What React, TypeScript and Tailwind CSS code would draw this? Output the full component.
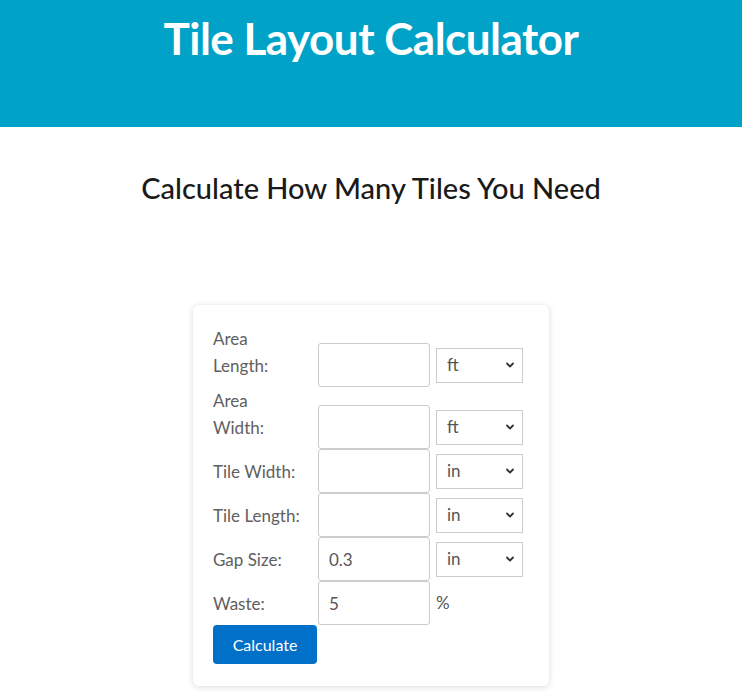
import React from "react";

interface IRow {
    label: string[];
    unit: string;
    value: string;
    options?: string[];
}

const rows: IRow[] = [
    { label: ["Area", "Length:"], unit: "ft", value: "", options: ["ft", "m", "in", "cm"] },
    { label: ["Area", "Width:"], unit: "ft", value: "", options: ["ft", "m", "in", "cm"] },
    { label: ["Tile Width:"], unit: "in", value: "", options: ["in", "cm", "mm"] },
    { label: ["Tile Length:"], unit: "in", value: "", options: ["in", "cm", "mm"] },
    { label: ["Gap Size:"], unit: "in", value: "0.3", options: ["in", "mm"] },
    { label: ["Waste:"], unit: "%", value: "5" },
];

const Chevron = () => (
    <svg
        className="pointer-events-none absolute right-[8px] top-1/2 -translate-y-1/2 w-[10px] h-[10px] text-[#333]"
        viewBox="0 0 10 10"
        fill="none"
        stroke="currentColor"
        strokeWidth={1.8}
    >
        <path d="M2 3.5l3 3 3-3" strokeLinecap="round" strokeLinejoin="round" />
    </svg>
);

const Row: React.FC<{ row: IRow }> = ({ row }) => (
    <div className="flex items-end">
        <label className="w-[105px] pb-[8px] text-[17px] leading-[27px] text-[#606060]">
            {row.label.map((l, i) => (
                <span key={i} className="block">
                    {l}
                </span>
            ))}
        </label>
        <div className="flex items-center gap-[6px]">
            <input
                type="text"
                defaultValue={row.value}
                className="w-[112px] h-[44px] border border-[#cccccc] rounded-[3px] px-[10px] text-[17px] text-[#555] outline-none"
            />
            {row.options ? (
                <div className="relative">
                    <select
                        defaultValue={row.unit}
                        className="appearance-none w-[87px] h-[35px] border border-[#cccccc] bg-white pl-[10px] text-[17px] text-[#555] outline-none"
                    >
                        {row.options.map((o) => (
                            <option key={o} value={o}>
                                {o}
                            </option>
                        ))}
                    </select>
                    <Chevron />
                </div>
            ) : (
                <span className="text-[17px] text-[#555]">{row.unit}</span>
            )}
        </div>
    </div>
);

export default function App() {
    return (
        <div className="min-h-screen bg-white font-['Lato',sans-serif]">
            {/* cabecera */}
            <header className="h-[127px] bg-[#00a2c7] pt-[12px]">
                <h1 className="text-center text-[44px] leading-[53px] font-bold text-white tracking-[-0.5px]">
                    Tile Layout Calculator
                </h1>
            </header>

            <h2 className="mt-[43px] text-center text-[29px] leading-[35px] font-medium text-[#1a1a1a]">
                Calculate How Many Tiles You Need
            </h2>

            {/* tarjeta del formulario */}
            <div className="mx-auto mt-[100px] w-[356px] rounded-[6px] bg-white px-[20px] pt-[20px] pb-[22px] shadow-[0_1px_6px_rgba(0,0,0,0.15)]">
                {rows.map((row, i) => (
                    <Row key={i} row={row} />
                ))}
                <button className="w-[104px] h-[39px] rounded-[4px] bg-[#0070c9] text-[16px] text-white">
                    Calculate
                </button>
            </div>
        </div>
    );
}
